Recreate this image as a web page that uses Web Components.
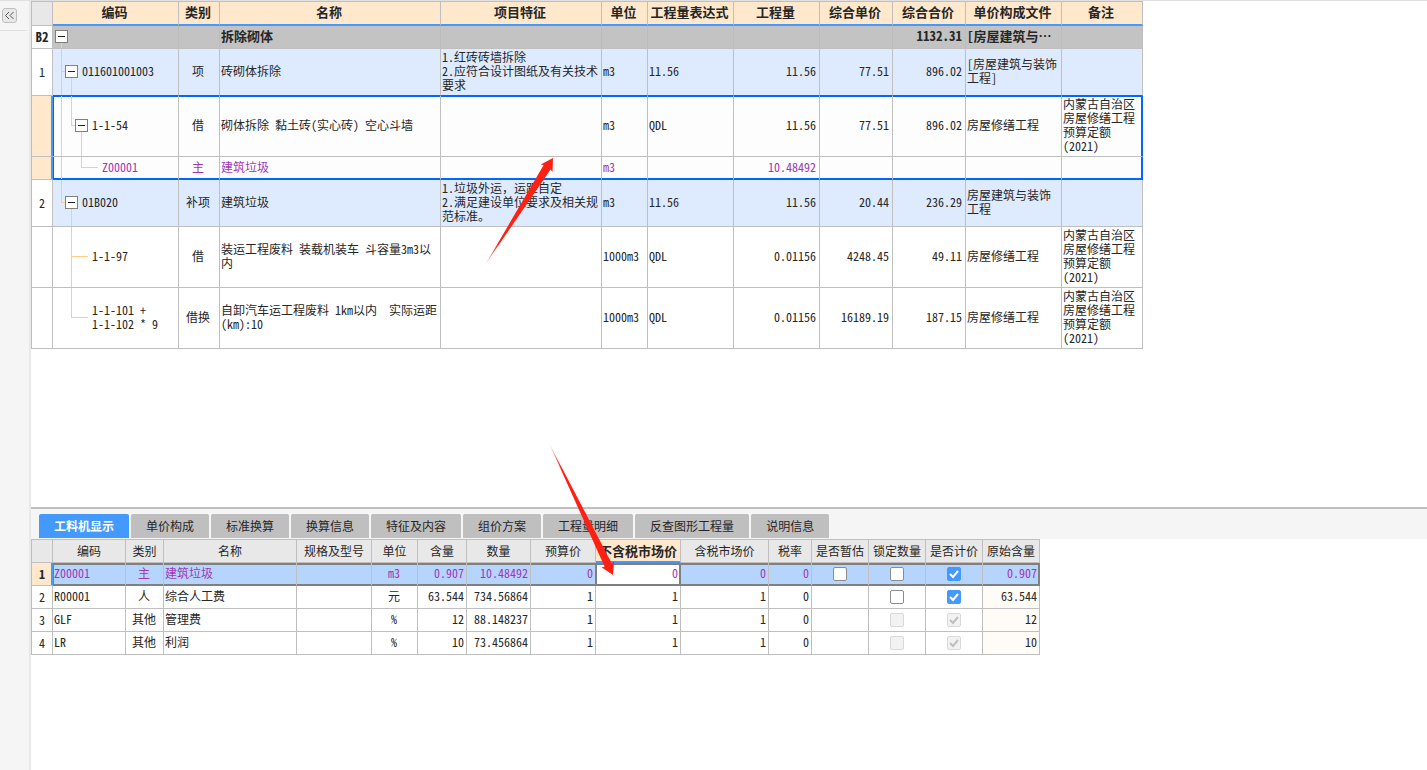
<!DOCTYPE html>
<html lang="zh-CN">
<head>
<meta charset="utf-8">
<title>工程计价</title>
<style>
html,body{margin:0;height:100%}
body{background:#fff;color:#262626;font:12px/14px "Noto Sans Mono CJK SC","Noto Sans CJK SC",sans-serif}
</style>
</head>
<body>
<estimate-app></estimate-app>
<script>
const define = (name, html, setup) => customElements.define(name, class extends HTMLElement {
  constructor() {
    super();
    const t = document.createElement('template');
    t.innerHTML = html;
    this.attachShadow({mode: 'open'}).append(t.content.cloneNode(true));
  }
  connectedCallback() { if (setup) setup(this, this.shadowRoot); }
});

const gridCss = `
:host{display:block}
table{border-collapse:separate;border-spacing:0;table-layout:fixed;width:0;border-left:1px solid #bfbfbf;border-top:1px solid #bfbfbf}
th,td{box-sizing:border-box;padding:0 3px 2px 1px;border-right:1px solid #bfbfbf;border-bottom:1px solid #bfbfbf;white-space:nowrap;overflow:hidden;text-align:left;font-weight:400}
th{text-align:center}
.c{text-align:center}.r{text-align:right}
.gut{padding:0;text-align:center;background:#fff}
thead .gut{background:#e8e8e8}
.gut.on{background:#ffe8cb;border-right-color:#49f;box-shadow:inset -1px 0 #49f}
.mat{color:#a335b5}`;

/* small expander box of the tree column */
define('tree-toggle', `<style>
:host{display:block;flex:none;position:relative;z-index:1}
button{display:block;box-sizing:border-box;width:13px;height:13px;margin:0;padding:0;border:1px solid #808080;background:#fff}
svg{display:block}
</style><button type="button" aria-label="折叠"><svg width="11" height="11"><path d="M2 5.5h7" stroke="#222"/></svg></button>`);

/* tree cell: connector lines plus indented code */
define('tree-node', `<style>
:host{display:flex;align-items:center;gap:4px;height:100%;position:relative;box-sizing:border-box;padding:0 0 2px var(--pad,0)}
i{position:absolute;background:#ffcc88}
</style><slot name="toggle"></slot><slot></slot>`, (el, root) => {
  const pad = {0: 2, 1: 12, 2: 22, 3: 39, 4: 49}[el.getAttribute('level')];
  el.style.setProperty('--pad', pad + 'px');
  for (const spec of (el.getAttribute('lines') || '').split(' ').filter(Boolean)) {
    const [kind, x, w] = spec.split(',');
    const line = document.createElement('i');
    line.style.left = x + 'px';
    line.style.width = (w || 1) + 'px';
    if (kind === 'h') { line.style.top = 'calc(50% - 1px)'; line.style.height = '1px'; }
    else { line.style.top = kind === 'b' ? '50%' : 0; line.style.bottom = kind === 't' ? '50%' : 0; }
    root.append(line);
  }
});

define('side-rail', `<style>
:host{display:block;box-sizing:border-box;width:31px;background:#f5f5f5;border-right:2px solid #e8e8e8}
div{box-sizing:border-box;width:27px;height:30px;padding:7px 0 0 2px;border-bottom:1px solid #e0e0e0}
button{display:block;box-sizing:border-box;width:15px;height:15px;padding:0;border:1px solid #bfbfbf;border-radius:3px;background:#e8e8e8}
svg{display:block}
</style><div><button type="button" aria-label="收起"><svg width="13" height="13" fill="none" stroke="#555"><path d="M6 3L2.5 6.5L6 10M10.500 3L7 6.500L10.500 10"/></svg></button></div>`);

const node = (level, lines, text, toggle = true) =>
  `<tree-node level="${level}" lines="${lines}">${toggle ? '<tree-toggle slot="toggle"></tree-toggle>' : ''}<span>${text}</span></tree-node>`;
const note = '内蒙古自治区<br>房屋修缮工程<br>预算定额<br>(2021)';
const billCols = [21,126,41,221,161,46,86,86,73,73,96,81];
const bill = [
 ['sum', 23, 'B2', node(0,'b,8',''), '', '拆除砌体', '', '', '', '', '', '1132.31', '[房屋建筑与…', ''],
 ['item before', 47, '1', node(1,'v,8 h,8,4 b,18','011601001003'), '项', '砖砌体拆除', '1.红砖砖墙拆除<br>2.应符合设计图纸及有关技术<br>要求', 'm3', '11.56', '11.56', '77.51', '896.02', '[房屋建筑与装饰<br>工程]', ''],
 ['sel first', 61, '', node(2,'v,8 t,18 h,18,4 b,28','1-1-54'), '借', '砌体拆除 黏土砖(实心砖) 空心斗墙', '', 'm3', 'QDL', '11.56', '77.51', '896.02', '房屋修缮工程', note],
 ['sel last mat', 23, '', node(4,'v,8 t,28 h,28,17','Z00001',false), '主', '建筑垃圾', '', 'm3', '', '10.48492', '', '', '', ''],
 ['item', 47, '2', node(1,'t,8 h,8,4 b,18','01B020'), '补项', '建筑垃圾', '1.垃圾外运，运距自定<br>2.满足建设单位要求及相关规<br>范标准。', 'm3', '11.56', '11.56', '20.44', '236.29', '房屋建筑与装饰<br>工程', ''],
 ['', 61, '', node(3,'v,18 h,18,17','1-1-97',false), '借', '装运工程废料 装载机装车 斗容量3m3以<br>内', '', '1000m3', 'QDL', '0.01156', '4248.45', '49.11', '房屋修缮工程', note],
 ['', 61, '', node(3,'t,18 h,18,17','1-1-101 +<br>1-1-102 * 9',false), '借换', '自卸汽车运工程废料 1km以内&nbsp; 实际运距<br>(km):10', '', '1000m3', 'QDL', '0.01156', '16189.19', '187.15', '房屋修缮工程', note]
];
const billAlign = ['','c','','','','','r','r','r','',''];
define('bill-grid', `<style>${gridCss}
thead th{height:24px;background:#ffe8cb;font-size:13px;font-weight:700;border-bottom:2px solid #49f}
thead .gut{border-bottom:1px solid #bfbfbf}
.code{padding:0}
.sum td,.sum .gut{font-size:13px;font-weight:700}
.sum td{background:#c3c3c3;border-right-color:#bcbcbc}
.item td{background:#deebff}
.before td{border-bottom-color:#06f}
.sel td{background:#fdfdfd}
.first td{box-shadow:inset 0 1px #06f}
.last td{border-bottom-color:#06f;box-shadow:inset 0 -1px #06f}
.sel td:last-child{border-right-color:#06f}
.first td:last-child{box-shadow:inset -1px 1px #06f}
.last td:last-child{box-shadow:inset -1px -1px #06f}
.first .code{box-shadow:inset 1px 1px #06f}
.last .code{box-shadow:inset 1px -1px #06f}
</style><table><colgroup>${billCols.map(w => `<col style="width:${w}px">`).join('')}</colgroup>
<thead><tr><th class="gut"></th>${['编码','类别','名称','项目特征','单位','工程量表达式','工程量','综合单价','综合合价','单价构成文件','备注'].map(t => `<th scope="col">${t}</th>`).join('')}</tr></thead>
<tbody>${bill.map(([cls, h, no, ...cells]) => `<tr class="${cls}" style="height:${h}px"><th scope="row" class="gut ${/sel/.test(cls) ? 'on' : ''}">${no}</th>${cells.map((t, i) => `<td class="${i ? billAlign[i] : 'code'}"${i ? '' : ` style="height:${h}px"`}>${t}</td>`).join('')}</tr>`).join('')}</tbody></table>`);

define('tab-strip', `<style>
:host{display:flex;gap:2px;box-sizing:border-box;height:30px;padding:5px 8px 0;background:#f5f5f5}
button{height:24px;margin:0;padding:0 15px;border:0;border-radius:2px 2px 0 0;background:#bfbfbf;color:#262626;font:12px/24px "Noto Sans CJK SC",sans-serif;white-space:nowrap}
button[aria-selected=true]{background:#49f;color:#fff;font-weight:700}
</style>${['工料机显示','单价构成','标准换算','换算信息','特征及内容','组价方案','工程量明细','反查图形工程量','说明信息'].map((t, i) => `<button type="button" role="tab" aria-selected="${!i}">${t}</button>`).join('')}`);

define('check-box', `<style>
:host{display:block}
input{appearance:none;display:block;box-sizing:border-box;width:14px;height:14px;margin:0 auto;border:1px solid #8c8c8c;border-radius:2px;background:#fff}
label{display:grid;position:relative;width:14px;margin:0 auto}
svg{display:none;position:absolute;inset:0}
input:checked{background:#49f;border-color:#49f}
input:checked+svg{display:block}
input:disabled{background:#f2f2f2;border-color:#d9d9d9}
path{fill:none;stroke:#fff;stroke-width:2}
input:disabled+svg path{stroke:#bfbfbf}
</style><label><input type="checkbox"><svg width="14" height="14"><path d="M3 7l3 3l5-6"/></svg></label>`, (el, root) => {
  const box = root.querySelector('input');
  box.checked = el.hasAttribute('checked');
  box.disabled = el.hasAttribute('disabled');
  box.setAttribute('aria-label', el.getAttribute('name'));
});

const off = '<check-box name="锁定数量"></check-box>', on = '<check-box name="是否计价" checked></check-box>';
const offD = '<check-box name="锁定数量" disabled></check-box>', onD = '<check-box name="是否计价" checked disabled></check-box>';
const resCols = [21,73,38,133,75,46,49,64,65,85,88,43,57,57,57,57];
const res = [
 ['Z00001','主','建筑垃圾','','m3','0.907','10.48492','0','0','0','0','<check-box name="是否暂估"></check-box>',off,on,'0.907'],
 ['R00001','人','综合人工费','','元','63.544','734.56864','1','1','1','0','',off,on,'63.544'],
 ['GLF','其他','管理费','','%','12','88.148237','1','1','1','0','',offD,onD,'12'],
 ['LR','其他','利润','','%','10','73.456864','1','1','1','0','',offD,onD,'10']
];
const resAlign = ['','c','','','c','r','r','r','r','r','r','k','k','k','r'];
define('resource-grid', `<style>${gridCss}
thead th{height:23px;padding:0;background:#e8e8e8}
thead .cur{background:#ffe8cb;font-size:13px;font-weight:700;border-bottom-color:#49f;box-shadow:inset 0 -1px #49f}
tbody tr{height:23px}
td{padding:0 2px 2px 1px}
.k{padding:0}
td:last-child{background:#fffcf7}
tbody .on{font-weight:700}
.act td{background:#b5d5ff;border-bottom-color:#808080;box-shadow:inset 0 2px #808080,inset 0 -1px #808080}
.act td:nth-child(2){box-shadow:inset 0 2px #808080,inset 1px -1px #808080}
.act td:nth-child(9){border-right-color:#808080}
.act td:nth-child(10){background:#fff;border-right-color:#808080;box-shadow:inset 1px 2px #808080,inset -1px -1px #808080}
.act td:last-child{border-right-color:#808080;box-shadow:inset 0 2px #808080,inset -1px -1px #808080}
</style><table><colgroup>${resCols.map(w => `<col style="width:${w}px">`).join('')}</colgroup>
<thead><tr><th class="gut"></th>${['编码','类别','名称','规格及型号','单位','含量','数量','预算价','不含税市场价','含税市场价','税率','是否暂估','锁定数量','是否计价','原始含量'].map((t, i) => `<th scope="col" class="${i === 8 ? 'cur' : ''}">${t}</th>`).join('')}</tr></thead>
<tbody>${res.map((cells, n) => `<tr class="${n ? '' : 'act mat'}"><th scope="row" class="gut ${n ? '' : 'on'}" style="color:#262626">${n + 1}</th>${cells.map((t, i) => `<td class="${resAlign[i]}">${t}</td>`).join('')}</tr>`).join('')}</tbody></table>`);

/* annotation arrows drawn above the grids */
define('red-arrow', `<style>
:host{display:block;position:absolute;z-index:5;pointer-events:none}
svg{display:block;overflow:visible}
</style><svg><defs><linearGradient id="g" gradientUnits="userSpaceOnUse"><stop offset="0" stop-color="#ff2014" stop-opacity=".2"/><stop offset=".2" stop-color="#ff2014"/></linearGradient></defs><polygon fill="url(#g)"/></svg>`, (el, root) => {
  const dx = +el.getAttribute('dx'), dy = +el.getAttribute('dy');
  const len = Math.hypot(dx, dy), ux = dx / len, uy = dy / len;
  const at = (d, s) => [d * ux - s * uy, d * uy + s * ux].map(v => v.toFixed(1)).join();
  root.querySelector('polygon').setAttribute('points', [at(0, 0), at(len - 11, 4), at(len - 12, 7), at(len, 0), at(len - 12, -7), at(len - 11, -4)].join(' '));
  const g = root.querySelector('linearGradient');
  g.setAttribute('x1', 0); g.setAttribute('y1', 0); g.setAttribute('x2', dx); g.setAttribute('y2', dy);
  const svg = root.querySelector('svg');
  svg.setAttribute('width', 1); svg.setAttribute('height', 1);
});

define('estimate-app', `<style>
:host{display:grid;grid-template-columns:auto minmax(0,1fr);min-height:100vh;box-sizing:border-box;border-top:1px solid #e0e0e0;position:relative}
main{display:grid;grid-template-rows:minmax(0,1fr) 263px}
section{min-width:0}
.lower{border-top:2px solid #bfbfbf}
.one{left:485px;top:264px}
.two{left:549px;top:442px}
</style><side-rail></side-rail><main><section><bill-grid></bill-grid></section><section class="lower"><tab-strip role="tablist"></tab-strip><resource-grid></resource-grid></section></main>
<red-arrow class="one" dx="68" dy="-107"></red-arrow><red-arrow class="two" dx="64" dy="132"></red-arrow>`);
</script>
</body>
</html>
